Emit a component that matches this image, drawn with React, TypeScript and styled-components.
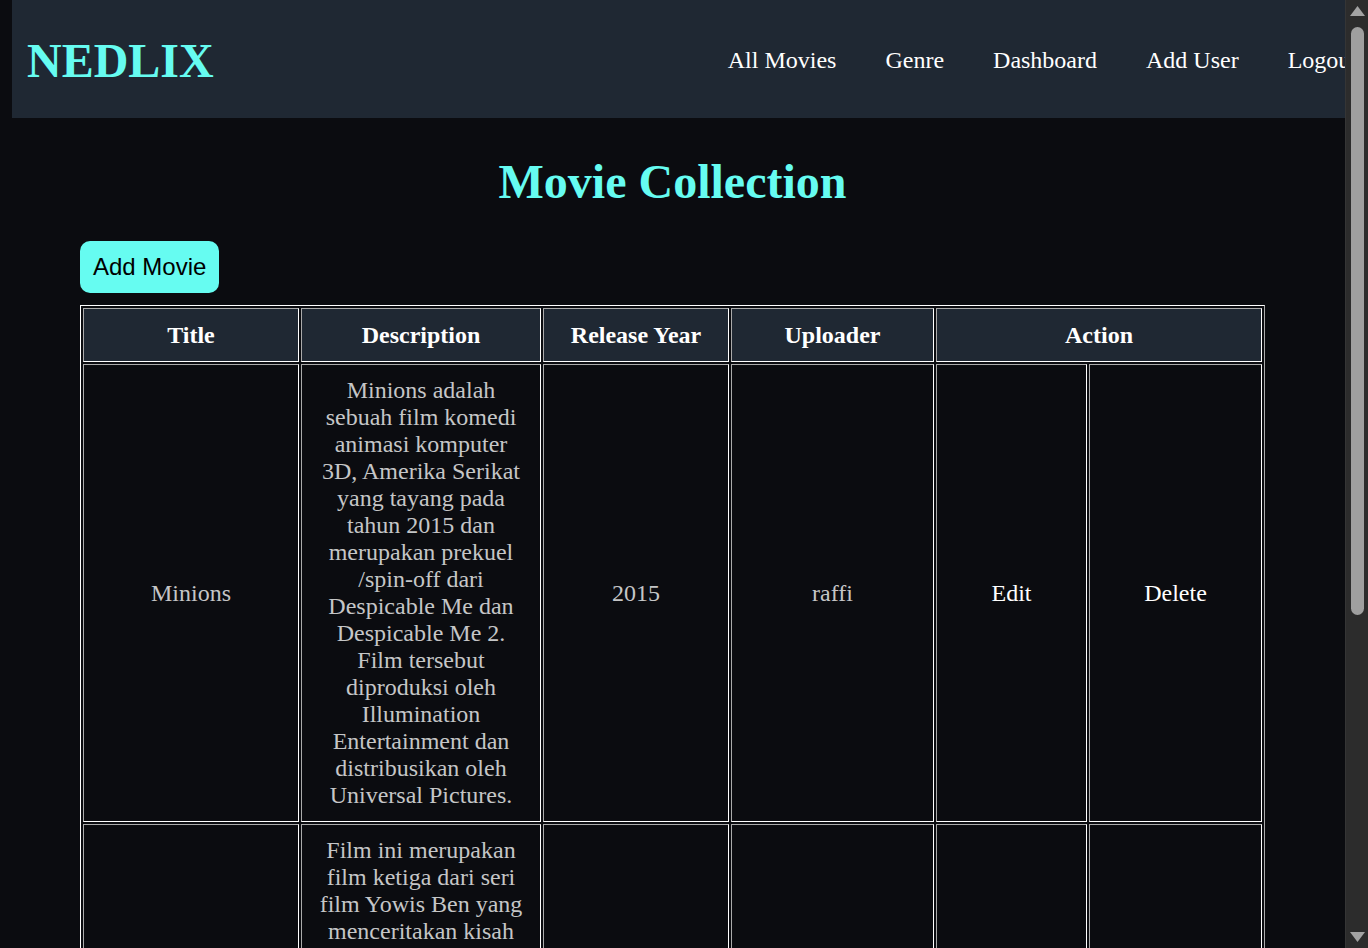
import React from "react";
import styled, { createGlobalStyle } from "styled-components";

const GlobalStyle = createGlobalStyle`
  html, body {
    margin: 0;
    padding: 0;
    height: 100%;
    overflow: hidden;
    background: #0b0c10;
  }
  body {
    font-family: "Liberation Serif", "Times New Roman", serif;
    font-size: 24px;
    color: #c5c6c7;
  }
`;

const Frame = styled.div`
  display: flex;
  height: 100vh;
  overflow: hidden;
`;

const Page = styled.div`
  flex: 0 0 1345px;
  width: 1345px;
  overflow: hidden;
`;

const ScrollBar = styled.div`
  flex: 0 0 23px;
  display: flex;
  flex-direction: column;
  align-items: center;
  box-sizing: border-box;
  border-left: 1px solid #353535;
  background: #2c2c2c;
`;

const ArrowIcon = styled.svg<{ $bottom?: boolean }>`
  display: block;
  margin: ${(p) => (p.$bottom ? "auto 0 6px" : "6px 0 0")};
`;

const Thumb = styled.div`
  margin-top: 11px;
  width: 13px;
  height: 588px;
  border-radius: 7px;
  background: #9f9f9f;
`;

const NavBar = styled.nav`
  display: flex;
  align-items: center;
  justify-content: space-between;
  box-sizing: border-box;
  margin-left: 12px;
  width: 1375px;
  height: 118px;
  padding: 2px 30px 0 15px;
  background: #1f2833;
`;

const Logo = styled.div`
  font-size: 48px;
  font-weight: bold;
  color: #66fcf1;
`;

const NavLinks = styled.div`
  display: flex;
  gap: 49px;
`;

const NavLink = styled.a`
  color: #ffffff;
  text-decoration: none;
  font-size: 24px;
`;

const Main = styled.main`
  padding: 0 80px;
`;

const Heading = styled.h1`
  margin: 36px 0 32px;
  text-align: center;
  font-size: 48px;
  font-weight: bold;
  color: #66fcf1;
`;

const AddButton = styled.button`
  display: block;
  margin: 0 0 12px;
  padding: 12px 13px;
  border: none;
  border-radius: 10px;
  background: #66fcf1;
  color: #000000;
  font-family: "Liberation Sans", Arial, sans-serif;
  font-size: 24px;
  cursor: pointer;
`;

const Table = styled.table`
  width: 1185px;
  table-layout: fixed;
  border: 1px outset #ffffff;
  border-spacing: 2px;
`;

const HeadCell = styled.th`
  border: 1px inset #ffffff;
  padding: 13px 15px 12px;
  background: #1f2833;
  color: #ffffff;
  font-weight: bold;
  text-align: center;
`;

const Cell = styled.td`
  border: 1px inset #ffffff;
  padding: 12px 15px;
  text-align: center;
  vertical-align: middle;
  color: #c5c6c7;
`;

const ActionLink = styled.a`
  color: #ffffff;
  text-decoration: none;
  cursor: pointer;
`;

const movies = [
  {
    title: "Minions",
    description:
      "Minions adalah sebuah film komedi animasi komputer 3D, Amerika Serikat yang tayang pada tahun 2015 dan merupakan prekuel /spin-off dari Despicable Me dan Despicable Me 2. Film tersebut diproduksi oleh Illumination Entertainment dan distribusikan oleh Universal Pictures.",
    year: 2015,
    uploader: "raffi",
  },
  {
    title: "Yowis Ben 3",
    description:
      "Film ini merupakan film ketiga dari seri film Yowis Ben yang menceritakan kisah Bayu dan kawan-kawannya yang harus menghadapi masalah baru dalam hidup dan karier band mereka.",
    year: 2021,
    uploader: "raffi",
  },
];

const colWidths = [216, 240, 186, 203, 151, 173];

export default function App() {
  return (
    <>
      <GlobalStyle />
      <Frame>
        <Page>
          <NavBar>
            <Logo>NEDLIX</Logo>
            <NavLinks>
              <NavLink href="#">All Movies</NavLink>
              <NavLink href="#">Genre</NavLink>
              <NavLink href="#">Dashboard</NavLink>
              <NavLink href="#">Add User</NavLink>
              <NavLink href="#">Logout</NavLink>
            </NavLinks>
          </NavBar>
          <Main>
            <Heading>Movie Collection</Heading>
            <AddButton>Add Movie</AddButton>
            <Table>
              <colgroup>
                {colWidths.map((w, i) => (
                  <col key={i} style={{ width: w }} />
                ))}
              </colgroup>
              <thead>
                <tr>
                  <HeadCell>Title</HeadCell>
                  <HeadCell>Description</HeadCell>
                  <HeadCell>Release Year</HeadCell>
                  <HeadCell>Uploader</HeadCell>
                  <HeadCell colSpan={2}>Action</HeadCell>
                </tr>
              </thead>
              <tbody>
                {movies.map((m) => (
                  <tr key={m.title}>
                    <Cell>{m.title}</Cell>
                    <Cell>{m.description}</Cell>
                    <Cell>{m.year}</Cell>
                    <Cell>{m.uploader}</Cell>
                    <Cell>
                      <ActionLink>Edit</ActionLink>
                    </Cell>
                    <Cell>
                      <ActionLink>Delete</ActionLink>
                    </Cell>
                  </tr>
                ))}
              </tbody>
            </Table>
          </Main>
        </Page>
        <ScrollBar aria-hidden="true">
          <ArrowIcon width="15" height="10" viewBox="0 0 15 10">
            <polygon points="7.5,0 15,10 0,10" fill="#a3a3a3" />
          </ArrowIcon>
          <Thumb />
          <ArrowIcon $bottom width="15" height="10" viewBox="0 0 15 10">
            <polygon points="0,0 15,0 7.5,10" fill="#a3a3a3" />
          </ArrowIcon>
        </ScrollBar>
      </Frame>
    </>
  );
}
